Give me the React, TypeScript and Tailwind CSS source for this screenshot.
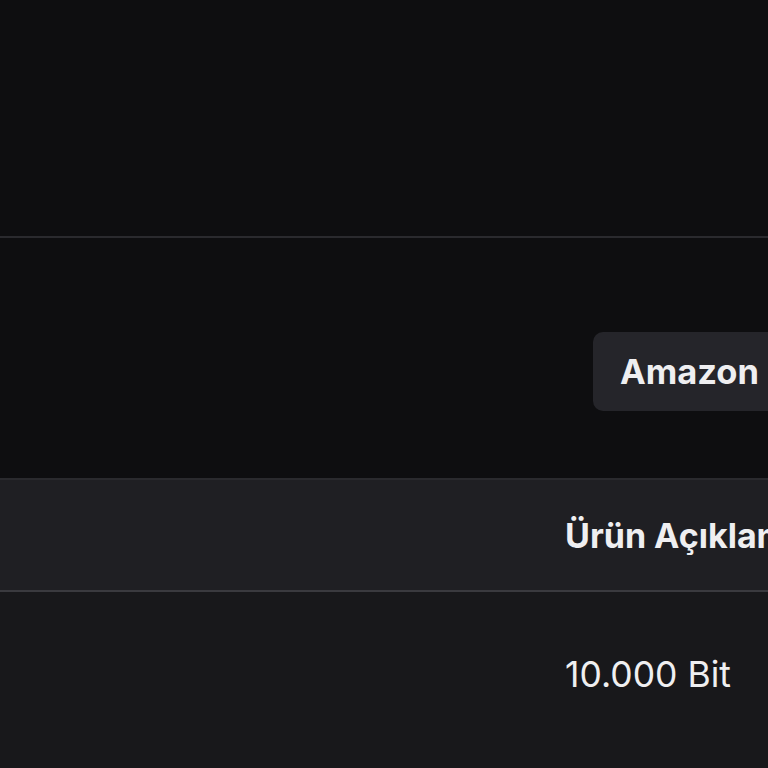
export default function App() {
  return (
    <div className="w-[768px] h-[768px] overflow-hidden bg-[#0e0e10] flex flex-col" style={{ fontFamily: 'Inter, "Noto Sans", sans-serif' }}>
      <div className="h-[236px] shrink-0 bg-[#0e0e10]" />
      <div className="h-[2px] shrink-0 bg-[#2a2a2e]" />
      <div className="h-[240px] shrink-0 bg-[#0e0e10] flex items-start justify-start pl-[593px] pt-[94px]">
        <div className="h-[79px] shrink-0 rounded-l-[10px] bg-[#25252a] pl-[27px] pr-[40px] flex items-center text-[34.5px] font-bold text-[#efeff1] whitespace-nowrap">
          Amazon Prime
        </div>
      </div>
      <div className="h-[2px] shrink-0 bg-[#2a2a2e]" />
      <div className="h-[110px] shrink-0 bg-[#1f1f23] flex items-center pl-[565px] text-[34px] font-bold text-[#efeff1] whitespace-nowrap">
        Ürün Açıklaması
      </div>
      <div className="h-[2px] shrink-0 bg-[#3a3a3f]" />
      <div className="flex-1 bg-[#18181b] flex items-start pl-[565px] pt-[56px] text-[35.5px] text-[#efeff1] whitespace-nowrap">
        10.000 Bit
      </div>
    </div>
  );
}
